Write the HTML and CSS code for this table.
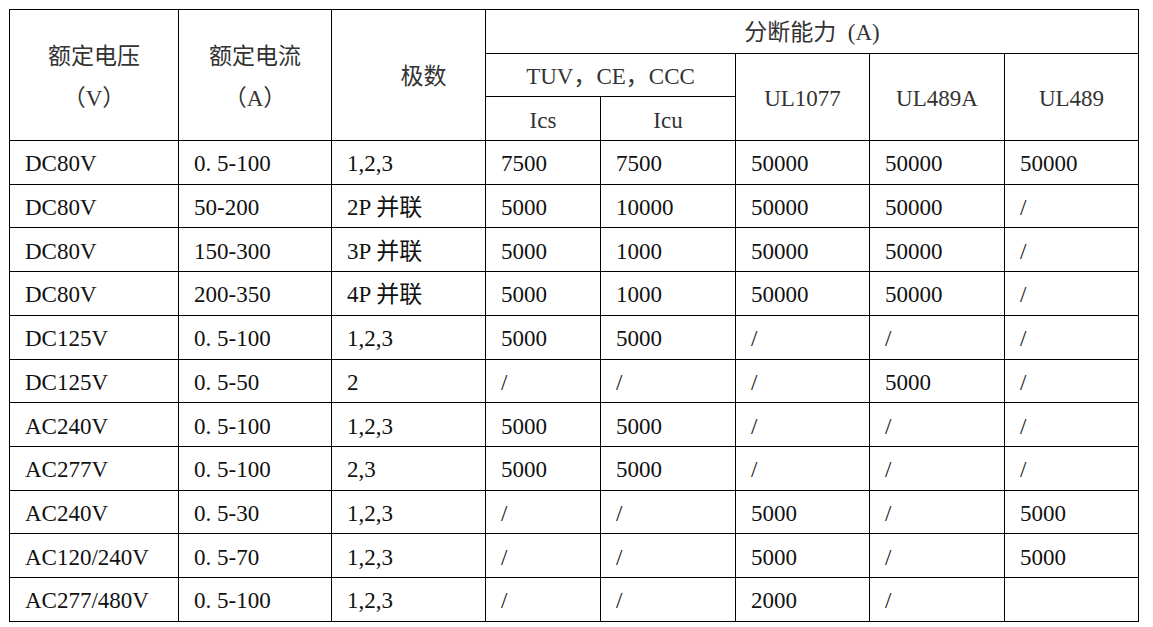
FILE: index.html
```html
<!DOCTYPE html>
<html lang="zh-CN">
<head>
<meta charset="utf-8">
<title>分断能力</title>
<link rel="stylesheet" href="styles.css">
</head>
<body>
<table class="spec">
  <colgroup>
    <col class="c1"><col class="c2"><col class="c3"><col class="c4"><col class="c5"><col class="c6"><col class="c7"><col class="c8">
  </colgroup>
  <thead>
    <tr>
      <th rowspan="3" class="hd2">额定电压<br>（V）</th>
      <th rowspan="3" class="hd2">额定电流<br>（A）</th>
      <th rowspan="3" class="poles">极数</th>
      <th colspan="5">分断能力&ensp;(A)</th>
    </tr>
    <tr>
      <th colspan="2">TUV，CE，CCC</th>
      <th rowspan="2">UL1077</th>
      <th rowspan="2">UL489A</th>
      <th rowspan="2">UL489</th>
    </tr>
    <tr>
      <th>Ics</th>
      <th>Icu</th>
    </tr>
  </thead>
  <tbody>
    <tr><td>DC80V</td><td>0. 5-100</td><td>1,2,3</td><td class="n">7500</td><td class="n">7500</td><td class="n">50000</td><td class="n">50000</td><td class="n">50000</td></tr>
    <tr><td>DC80V</td><td>50-200</td><td>2P 并联</td><td class="n">5000</td><td class="n">10000</td><td class="n">50000</td><td class="n">50000</td><td class="n">/</td></tr>
    <tr><td>DC80V</td><td>150-300</td><td>3P 并联</td><td class="n">5000</td><td class="n">1000</td><td class="n">50000</td><td class="n">50000</td><td class="n">/</td></tr>
    <tr><td>DC80V</td><td>200-350</td><td>4P 并联</td><td class="n">5000</td><td class="n">1000</td><td class="n">50000</td><td class="n">50000</td><td class="n">/</td></tr>
    <tr><td>DC125V</td><td>0. 5-100</td><td>1,2,3</td><td class="n">5000</td><td class="n">5000</td><td class="n">/</td><td class="n">/</td><td class="n">/</td></tr>
    <tr><td>DC125V</td><td>0. 5-50</td><td>2</td><td class="n">/</td><td class="n">/</td><td class="n">/</td><td class="n">5000</td><td class="n">/</td></tr>
    <tr><td>AC240V</td><td>0. 5-100</td><td>1,2,3</td><td class="n">5000</td><td class="n">5000</td><td class="n">/</td><td class="n">/</td><td class="n">/</td></tr>
    <tr><td>AC277V</td><td>0. 5-100</td><td>2,3</td><td class="n">5000</td><td class="n">5000</td><td class="n">/</td><td class="n">/</td><td class="n">/</td></tr>
    <tr><td>AC240V</td><td>0. 5-30</td><td>1,2,3</td><td class="n">/</td><td class="n">/</td><td class="n">5000</td><td class="n">/</td><td class="n">5000</td></tr>
    <tr><td>AC120/240V</td><td>0. 5-70</td><td>1,2,3</td><td class="n">/</td><td class="n">/</td><td class="n">5000</td><td class="n">/</td><td class="n">5000</td></tr>
    <tr><td>AC277/480V</td><td>0. 5-100</td><td>1,2,3</td><td class="n">/</td><td class="n">/</td><td class="n">2000</td><td class="n">/</td><td class="n"></td></tr>
  </tbody>
</table>
</body>
</html>
```

FILE: styles.css
```css
html, body {
  margin: 0;
  padding: 0;
  background: #fff;
}
body {
  padding: 9px 0 0 9px;
}
.spec {
  border-collapse: collapse;
  table-layout: fixed;
  width: 1130px;
  color: #111;
  font-family: "Liberation Serif", "Noto Sans CJK SC", serif;
  font-size: 23px;
}
.c1 { width: 169px; }
.c2 { width: 153px; }
.c3 { width: 154px; }
.c4 { width: 115px; }
.c5 { width: 135px; }
.c6 { width: 134px; }
.c7 { width: 135px; }
.c8 { width: 134px; }

.spec th,
.spec td {
  border: 1px solid #000;
  height: 43.7px;
  padding: 4px 0 0 0;
  box-sizing: border-box;
  line-height: 26px;
  white-space: nowrap;
  overflow: hidden;
}
.spec th {
  font-weight: normal;
  text-align: center;
  vertical-align: middle;
  color: #333;
}
.spec th.hd2 {
  line-height: 42px;
  padding-top: 6px;
}
.spec th.poles {
  padding-left: 30px;
}
.spec td {
  text-align: left;
  vertical-align: middle;
  padding-left: 15px;
}
```
